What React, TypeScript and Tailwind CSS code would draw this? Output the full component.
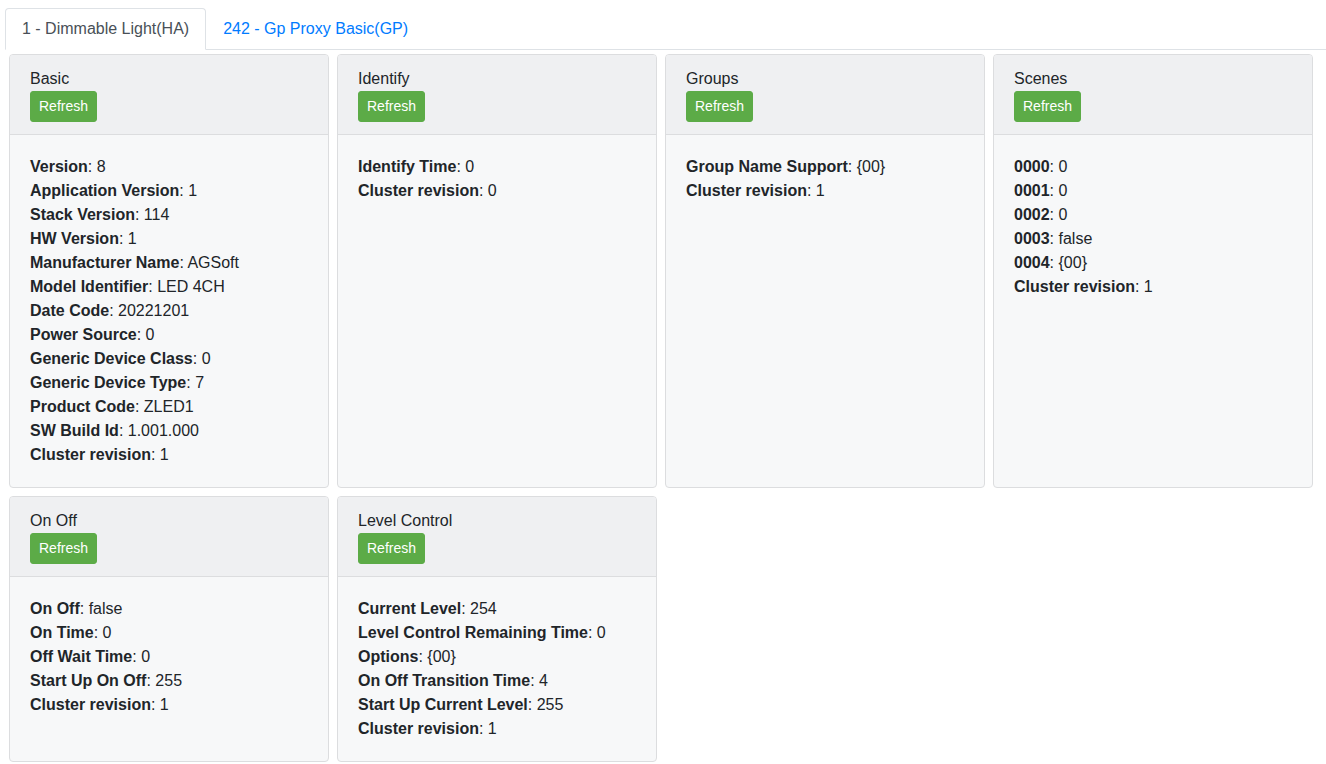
import React from 'react';

type Attr = [string, string];

type Cluster = {
  title: string;
  attrs: Attr[];
};

const clusters: Cluster[] = [
  {
    title: 'Basic',
    attrs: [
      ['Version', '8'],
      ['Application Version', '1'],
      ['Stack Version', '114'],
      ['HW Version', '1'],
      ['Manufacturer Name', 'AGSoft'],
      ['Model Identifier', 'LED 4CH'],
      ['Date Code', '20221201'],
      ['Power Source', '0'],
      ['Generic Device Class', '0'],
      ['Generic Device Type', '7'],
      ['Product Code', 'ZLED1'],
      ['SW Build Id', '1.001.000'],
      ['Cluster revision', '1'],
    ],
  },
  {
    title: 'Identify',
    attrs: [
      ['Identify Time', '0'],
      ['Cluster revision', '0'],
    ],
  },
  {
    title: 'Groups',
    attrs: [
      ['Group Name Support', '{00}'],
      ['Cluster revision', '1'],
    ],
  },
  {
    title: 'Scenes',
    attrs: [
      ['0000', '0'],
      ['0001', '0'],
      ['0002', '0'],
      ['0003', 'false'],
      ['0004', '{00}'],
      ['Cluster revision', '1'],
    ],
  },
  {
    title: 'On Off',
    attrs: [
      ['On Off', 'false'],
      ['On Time', '0'],
      ['Off Wait Time', '0'],
      ['Start Up On Off', '255'],
      ['Cluster revision', '1'],
    ],
  },
  {
    title: 'Level Control',
    attrs: [
      ['Current Level', '254'],
      ['Level Control Remaining Time', '0'],
      ['Options', '{00}'],
      ['On Off Transition Time', '4'],
      ['Start Up Current Level', '255'],
      ['Cluster revision', '1'],
    ],
  },
];

function ClusterCard({ cluster }: { cluster: Cluster }) {
  return (
    <div className="w-[320px] flex flex-col rounded border border-[#dcdddf] bg-[#f7f8f9] overflow-hidden">
      <div className="px-5 py-3 bg-[#eff0f2] border-b border-[#dcdddf]">
        <div className="text-[#212529] leading-6">{cluster.title}</div>
        <button className="bg-[#5cab47] text-white text-sm leading-[21px] px-2 py-1 rounded-[3px] border border-[#5cab47]">
          Refresh
        </button>
      </div>
      <div className="flex-1 p-5 text-[#212529] leading-6">
        {cluster.attrs.map(([k, v]) => (
          <div key={k}>
            <b>{k}</b>: {v}
          </div>
        ))}
      </div>
    </div>
  );
}

export default function App() {
  return (
    <div className="min-h-screen bg-white pt-2 pl-[5px] text-base" style={{ fontFamily: '"Liberation Sans", Arial, sans-serif' }}>
      {/* вкладки */}
      <div className="flex border-b border-[#dee2e6]">
        <div className="-mb-px px-4 pt-2 pb-[7px] leading-6 border border-[#dee2e6] border-b-white bg-white rounded-t text-[#495057]">
          1 - Dimmable Light(HA)
        </div>
        <div className="px-4 pt-2 pb-[7px] leading-6 border border-transparent text-[#007bff]">242 - Gp Proxy Basic(GP)</div>
      </div>

      <div className="flex flex-wrap gap-x-2 gap-y-[8px] pl-[4px] pt-[4px]">
        {clusters.map((c) => (
          <ClusterCard key={c.title} cluster={c} />
        ))}
      </div>
    </div>
  );
}
